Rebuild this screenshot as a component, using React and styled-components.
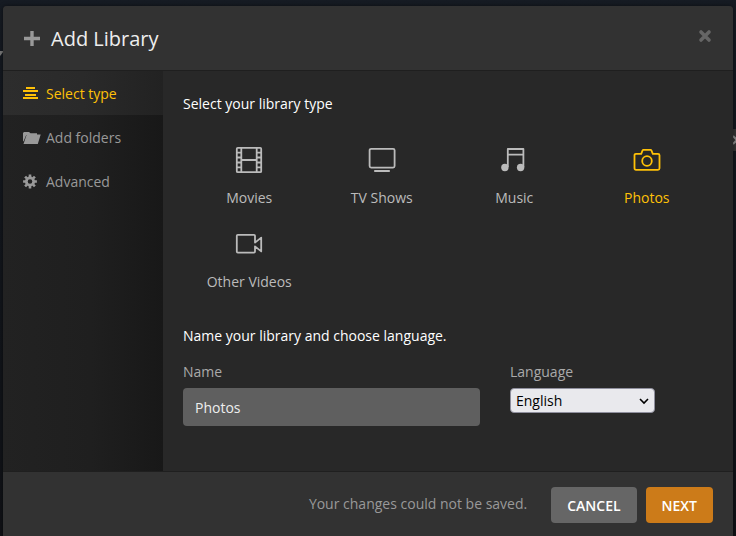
import React, { useState } from 'react';
import styled, { createGlobalStyle } from 'styled-components';

const GlobalStyle = createGlobalStyle`
  *, *::before, *::after {
    box-sizing: border-box;
  }
  body {
    margin: 0;
    background: #14181f;
    color: #bbb;
    font-family: 'Open Sans', 'Noto Sans', sans-serif;
    font-size: 14px;
    line-height: 20px;
  }
  button, input, select {
    font: inherit;
  }
`;

const Backdrop = styled.div`
  position: relative;
  min-height: 100vh;
  padding: 6px 3px 0;
  display: flex;
  background: linear-gradient(#161b23, #14181f 60px, #101216);
  overflow: hidden;
`;

/* slivers of the page behind the dialog */
const PageCaret = styled.span`
  position: absolute;
  left: -4px;
  top: 51px;
  border: 4px solid transparent;
  border-top: 5px solid #777;
`;

const PageTab = styled.span`
  position: absolute;
  right: 0;
  top: 129px;
  width: 3px;
  height: 22px;
  display: flex;
  align-items: center;
  justify-content: flex-end;
  background: #333;
`;

const Modal = styled.section`
  position: relative;
  flex: 1;
  display: flex;
  flex-direction: column;
  background: #282828;
  border-radius: 4px 4px 0 0;
  box-shadow: 0 0 4px rgba(0, 0, 0, 0.5);
  overflow: hidden;
`;

const Header = styled.header`
  display: flex;
  align-items: center;
  height: 65px;
  padding: 2px 20px 0;
  background: #323232;
  border-bottom: 1px solid #1f1f1f;
`;

const Title = styled.h1`
  flex: 1;
  margin: 0 0 0 10px;
  color: #eee;
  font-size: 20px;
  font-weight: 400;
  line-height: 28px;
`;

const CloseButton = styled.button`
  display: flex;
  margin-bottom: 7px;
  padding: 0;
  border: 0;
  background: none;
  cursor: pointer;
`;

const Body = styled.div`
  flex: 1;
  display: flex;
`;

const Sidebar = styled.nav`
  width: 160px;
  background: linear-gradient(to right, #222 0%, #1f1f1f 55%, #181818 100%);
`;

const Step = styled.a`
  display: flex;
  align-items: center;
  gap: 7px;
  height: 44px;
  padding: 2px 20px 0 19px;
  color: ${props => (props.$active ? '#ffc107' : '#999')};
  background: ${props =>
    props.$active ? 'linear-gradient(to right, #2d2d2d 0%, #2a2a2a 50%, #222 100%)' : 'none'};
  text-decoration: none;

  svg {
    overflow: visible;
  }
`;

const Content = styled.main`
  flex: 1;
  padding: 23px 20px 44px;
`;

const Heading = styled.h2`
  margin: 0;
  color: #fff;
  font-size: 14px;
  font-weight: 400;
`;

const TypeGrid = styled.div`
  display: grid;
  grid-template-columns: repeat(4, 1fr);
  margin: 20px 0 24px;
`;

const TypeButton = styled.button`
  display: flex;
  flex-direction: column;
  align-items: center;
  gap: 14px;
  height: 84px;
  padding: 12px 0 10px;
  border: 0;
  background: none;
  color: ${props => (props.$selected ? '#ffc107' : '#bbb')};
  cursor: pointer;
`;

const FormRow = styled.div`
  display: flex;
  gap: 30px;
  margin-top: 16px;
`;

const Field = styled.div`
  ${props => (props.$wide ? 'flex: 1;' : 'width: 203px;')}
`;

const Label = styled.label`
  display: block;
  margin-bottom: 6px;
  color: #aaa;
`;

const TextInput = styled.input`
  display: block;
  width: 100%;
  height: 38px;
  padding: 0 12px;
  border: 0;
  border-radius: 4px;
  background: #5f5f5f;
  color: #eee;
`;

const SelectWrap = styled.div`
  display: grid;
  width: 145px;
  align-items: center;

  > * {
    grid-area: 1 / 1;
  }
  > svg {
    justify-self: end;
    margin-right: 6px;
    pointer-events: none;
  }
`;

const Select = styled.select`
  appearance: none;
  width: 100%;
  height: 25px;
  padding: 0 24px 0 5px;
  border: 1px solid #8f8f9d;
  border-radius: 4px;
  background: #e9e9ed;
  color: #000;
`;

const Footer = styled.footer`
  display: flex;
  align-items: center;
  justify-content: flex-end;
  gap: 9px;
  height: 65px;
  padding: 2px 20px 0;
  background: #323232;
  border-top: 1px solid #1f1f1f;
`;

const Message = styled.p`
  margin: 0 15px 2px 0;
  color: #999;
`;

const Button = styled.button`
  height: 36px;
  padding: 2px 16px 0;
  border: 0;
  border-radius: 4px;
  background: ${props => (props.$primary ? '#cc7b19' : '#666')};
  color: #fff;
  font-weight: 600;
  text-transform: uppercase;
  cursor: pointer;
`;

const StepIcon = ({ children }) => (
  <svg width="17" height="16" viewBox="0 0 17 16" fill="currentColor" aria-hidden="true">
    {children}
  </svg>
);

const TypeIcon = ({ children }) => (
  <svg
    width="28"
    height="28"
    viewBox="0 0 28 28"
    fill="none"
    stroke="currentColor"
    strokeWidth="1.8"
    strokeLinejoin="round"
    aria-hidden="true"
  >
    {children}
  </svg>
);

const steps = [
  {
    id: 'type',
    label: 'Select type',
    icon: <path d="M4 1h9v2H4zM1 4h15v2H1zM3 8h11v2H3zM1 11h15v2H1z" />
  },
  {
    id: 'folders',
    label: 'Add folders',
    icon: <path d="M1 11V3l1-1h5l1.500 1.200H15v1.700H4.200L1.500 11.500zM4.700 4.400h14L15.800 14H1.500z" />
  },
  {
    id: 'advanced',
    label: 'Advanced',
    icon: (
      <>
        <circle cx="8" cy="7.5" r="3.7" fill="none" stroke="currentColor" strokeWidth="2.8" />
        <path
          d="M8 .6v2.6M8 11.8v2.6M1.100 7.500h2.600M12.300 7.500h2.600M3.100 2.600l1.800 1.800M11.100 10.600l1.800 1.800M12.900 2.600l-1.800 1.800M4.900 10.600l-1.800 1.800"
          stroke="currentColor"
          strokeWidth="2.6"
        />
      </>
    )
  }
];

const types = [
  {
    name: 'Movies',
    icon: (
      <>
        <rect x="1.8" y="1.8" width="24.4" height="24.4" rx="1" />
        <path d="M6.3 2v24M21.7 2v24M6.3 14h15.4M2 6.6h4.3M2 11.5h4.3M2 16.5h4.3M2 21.4h4.3M21.7 6.6H26M21.7 11.5H26M21.7 16.5H26M21.7 21.4H26" />
      </>
    )
  },
  {
    name: 'TV Shows',
    icon: (
      <>
        <rect x="1.6" y="2.8" width="25" height="18.8" rx="1.5" />
        <path d="M6.2 25h15.6" />
      </>
    )
  },
  {
    name: 'Music',
    icon: (
      <>
        <path d="M7.8 21V3h15.6v18M7.8 8.6h15.6" />
        <circle cx="4.9" cy="21.5" r="3.7" fill="currentColor" stroke="none" />
        <circle cx="20.6" cy="21.5" r="3.7" fill="currentColor" stroke="none" />
      </>
    )
  },
  {
    name: 'Photos',
    icon: (
      <>
        <path d="M3 7.8h5.200l1.300-3.200q.3-.7 1-.7h7q.7 0 1 .7l1.300 3.200H25q1.500 0 1.500 1.500v13q0 1.500-1.500 1.500H3q-1.500 0-1.500-1.500v-13q0-1.500 1.500-1.500z" />
        <circle cx="14" cy="15" r="4.8" />
      </>
    )
  },
  {
    name: 'Other Videos',
    icon: (
      <path d="M2.800 4.800H19q1 0 1 1v6.800l6.200-5v13.800l-6.200-5v5.200q0 1-1 1H2.800q-1 0-1-1V5.800q0-1 1-1z" />
    )
  }
];

const App = () => {
  const [type, setType] = useState('Photos');
  const [name, setName] = useState('Photos');

  return (
    <Backdrop>
      <GlobalStyle />
      <PageCaret />
      <PageTab>
        <svg width="3" height="10" viewBox="0 0 3 10" aria-hidden="true">
          <path d="M0 1l4 4-4 4" fill="none" stroke="#888" strokeWidth="2" />
        </svg>
      </PageTab>
      <Modal role="dialog" aria-labelledby="dialog-title">
        <Header>
          <svg width="18" height="18" viewBox="0 0 18 18" aria-hidden="true">
            <path d="M9 1v15M1 8.5h16" stroke="#999" strokeWidth="3.4" />
          </svg>
          <Title id="dialog-title">Add Library</Title>
          <CloseButton type="button" aria-label="Close">
            <svg width="16" height="16" viewBox="0 0 16 16">
              <path d="M4 4l8 8M12 4l-8 8" stroke="#666" strokeWidth="3.6" strokeLinecap="round" />
            </svg>
          </CloseButton>
        </Header>
        <Body>
          <Sidebar>
            {steps.map(step => (
              <Step key={step.id} href={`#${step.id}`} $active={step.id === 'type'}>
                <StepIcon>{step.icon}</StepIcon>
                {step.label}
              </Step>
            ))}
          </Sidebar>
          <Content>
            <Heading>Select your library type</Heading>
            <TypeGrid>
              {types.map(item => (
                <TypeButton
                  key={item.name}
                  type="button"
                  $selected={item.name === type}
                  onClick={() => setType(item.name)}
                >
                  <TypeIcon>{item.icon}</TypeIcon>
                  {item.name}
                </TypeButton>
              ))}
            </TypeGrid>
            <Heading>Name your library and choose language.</Heading>
            <FormRow>
              <Field $wide>
                <Label htmlFor="name">Name</Label>
                <TextInput id="name" value={name} onChange={e => setName(e.target.value)} />
              </Field>
              <Field>
                <Label htmlFor="language">Language</Label>
                <SelectWrap>
                  <Select id="language" defaultValue="en">
                    <option value="en">English</option>
                  </Select>
                  <svg width="10" height="10" viewBox="0 0 10 10" aria-hidden="true">
                    <path d="M1 3l4 4 4-4" fill="none" stroke="#000" strokeWidth="1.6" />
                  </svg>
                </SelectWrap>
              </Field>
            </FormRow>
          </Content>
        </Body>
        <Footer>
          <Message>Your changes could not be saved.</Message>
          <Button type="button">Cancel</Button>
          <Button type="button" $primary>
            Next
          </Button>
        </Footer>
      </Modal>
    </Backdrop>
  );
};

export default App;
